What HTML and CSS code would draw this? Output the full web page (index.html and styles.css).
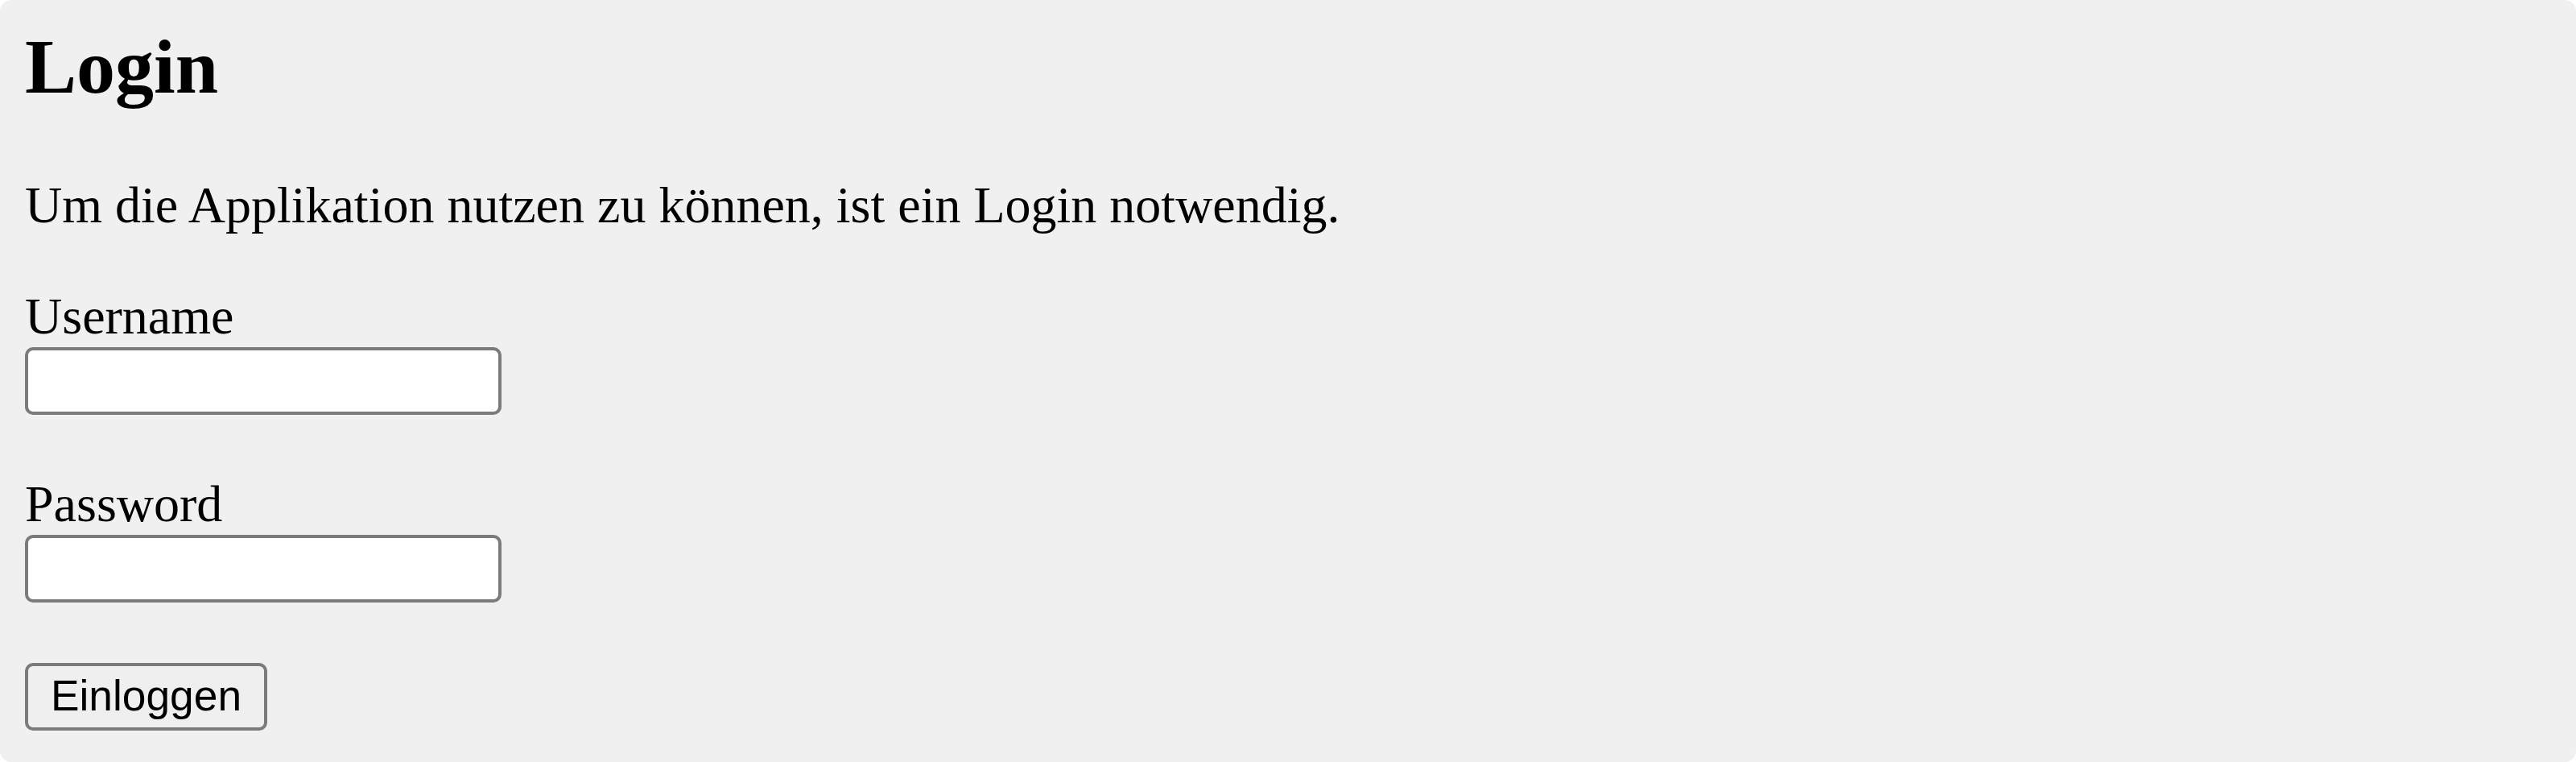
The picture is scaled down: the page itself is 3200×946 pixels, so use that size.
FILE: index.html
```html
<!DOCTYPE html>
<html lang="de">
<head>
<meta charset="utf-8">
<title>Login</title>
<link rel="stylesheet" href="styles.css">
</head>
<body>
<main class="page">
  <h1 class="title">Login</h1>
  <p class="intro">Um die Applikation nutzen zu können, ist ein Login notwendig.</p>
  <form class="form">
    <div class="field">
      <label class="label" for="username">Username</label>
      <input class="input" id="username" type="text">
    </div>
    <div class="field">
      <label class="label" for="password">Password</label>
      <input class="input" id="password" type="password">
    </div>
    <div class="actions">
      <button class="button" type="button">Einloggen</button>
    </div>
  </form>
</main>
</body>
</html>
```

FILE: styles.css
```css
html, body {
  margin: 0;
  padding: 0;
  background: #ffffff;
}

.page {
  box-sizing: border-box;
  width: 3200px;
  height: 946px;
  background: #f0f0f0;
  border-radius: 14px;
  padding: 28px 32px 40px 31px;
  font-family: "Liberation Serif", "Times New Roman", serif;
  color: #000;
  overflow: hidden;
}

.title {
  margin: 0;
  font-size: 96px;
  line-height: 110px;
  font-weight: bold;
}

.intro {
  margin: 80px 0 64px;
  font-size: 64px;
  line-height: 74px;
}

.form {
  display: flex;
  flex-direction: column;
  align-items: flex-start;
  margin: 0;
}

.field {
  display: flex;
  flex-direction: column;
  align-items: flex-start;
  margin-bottom: 74px;
}

.label {
  display: block;
  font-size: 64px;
  line-height: 74px;
}

.input {
  box-sizing: border-box;
  display: block;
  width: 592px;
  height: 84px;
  margin: 1px 0 0;
  padding: 4px 8px;
  border: 4px solid #7b7b7b;
  border-radius: 10px;
  background: #ffffff;
  font-family: "Liberation Sans", Arial, sans-serif;
  font-size: 53px;
  outline: none;
}

.actions {
  display: flex;
  margin-top: 1px;
}

.button {
  box-sizing: border-box;
  width: 301px;
  height: 84px;
  padding: 0 0 2px;
  border: 4px solid #7b7b7b;
  border-radius: 10px;
  background: #efefef;
  color: #000;
  font-family: "Liberation Sans", Arial, sans-serif;
  font-size: 53.3px;
  line-height: 1;
  text-align: center;
}
```
